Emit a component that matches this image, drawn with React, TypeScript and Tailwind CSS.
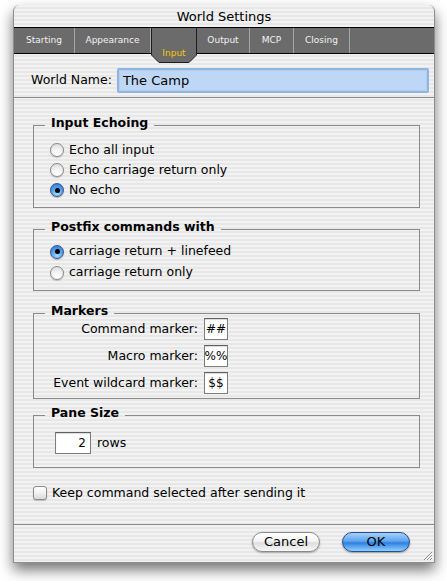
import React from "react";

const stripes =
  "bg-[repeating-linear-gradient(180deg,#f2f2f2_0px,#f2f2f2_2px,#e7e7e7_2px,#e7e7e7_4px)]";

function Radio({ checked }: { checked?: boolean }) {
  if (checked) {
    return (
      <div className="w-[14px] h-[14px] rounded-full border border-[#35588f] bg-[radial-gradient(circle_at_50%_80%,#a9dcff_0%,#5aa5ef_45%,#2b6fcf_100%)] flex items-center justify-center shadow-[0_1px_1px_rgba(0,0,0,0.25)]">
        <div className="w-[5px] h-[5px] rounded-full bg-black" />
      </div>
    );
  }
  return (
    <div className="w-[14px] h-[14px] rounded-full border border-[#8a8a8a] bg-[radial-gradient(circle_at_50%_85%,#ffffff_0%,#f3f3f3_45%,#d4d4d4_100%)] shadow-[0_1px_1px_rgba(0,0,0,0.2)]" />
  );
}

function RadioRow({ label, checked, h }: { label: string; checked?: boolean; h: string }) {
  return (
    <div className={`flex items-center gap-[5px] ${h}`}>
      <Radio checked={checked} />
      <span className="leading-none">{label}</span>
    </div>
  );
}

function Field({ value, className }: { value: string; className: string }) {
  return (
    <div
      className={`bg-white border border-[#7d7d7d] border-t-[#5f5f5f] shadow-[inset_0_1px_1px_rgba(0,0,0,0.15)] flex items-center text-[12px] ${className}`}
    >
      {value}
    </div>
  );
}

export default function App() {
  return (
    <div className="min-h-[581px] w-[447px] bg-white pt-[5px] pl-[13px] font-['DejaVu_Sans',sans-serif] text-[12.5px] text-black">
      <div
        className={`relative w-[422px] h-[558px] flex flex-col rounded-t-[6px] border-x border-b border-[#8e8e8e] overflow-hidden shadow-[0_7px_14px_rgba(0,0,0,0.55)] ${stripes}`}
      >
        {/* Title bar */}
        <div className="h-[22px] flex items-center justify-center text-[13px] pt-[1px]">
          World Settings
        </div>

        {/* Tab bar */}
        <div className="h-[27px] border-y border-black bg-[#6b6b6b] flex text-[9px] text-[#f2f2f2]">
          <div className="w-[61px] flex items-center justify-center border-r border-[#a5a5a5]">
            Starting
          </div>
          <div className="w-[76px] flex items-center justify-center border-r border-[#a5a5a5]">
            Appearance
          </div>
          <div className="relative w-[46px]">
            <svg
              className="absolute left-0 top-0 z-10"
              width="46"
              height="36"
              viewBox="0 0 46 36"
            >
              <path
                d="M0.5 0 V27 L8 34.5 H38 L45.5 27 V0"
                fill="#6b6b6b"
                stroke="#1e1e1e"
                strokeWidth="1"
              />
            </svg>
            <div className="absolute inset-x-0 top-[18px] z-20 text-center leading-[14px] text-[#f7c600]">
              Input
            </div>
          </div>
          <div className="w-[53px] flex items-center justify-center border-r border-[#a5a5a5]">
            Output
          </div>
          <div className="w-[44px] flex items-center justify-center border-r border-[#a5a5a5]">
            MCP
          </div>
          <div className="w-[56px] flex items-center justify-center border-r border-[#a5a5a5]">
            Closing
          </div>
          <div className="flex-1" />
        </div>

        {/* World name */}
        <div className="mt-[14px] mb-[4px] h-[25px] flex items-center pl-[17px] pr-[5px]">
          <span className="text-[12.5px] whitespace-nowrap">World Name:</span>
          <div className="ml-[5px] flex-1 h-[25px] border-2 border-[#8fb4e6] rounded-[2px] bg-[#bed7f7] shadow-[inset_0_0_0_1px_#b7cde9] flex items-center pl-[4px] text-[13px]">
            The Camp
          </div>
        </div>
        <div className="h-px bg-[#8a8a8a]" />

        {/* Content */}
        <div className="flex-1 flex flex-col pl-[19px] pr-[14px]">
          {/* Input Echoing */}
          <fieldset className="mt-[18px] border border-[#8a8a8a] p-0 m-0 min-w-0">
            <legend className="ml-[11px] px-[6px] pb-[4px] leading-[14px] font-bold">
              Input Echoing
            </legend>
            <div className="pl-[16px] pt-[6px] pb-[7px] flex flex-col">
              <RadioRow label="Echo all input" h="h-[20px]" />
              <RadioRow label="Echo carriage return only" h="h-[20px]" />
              <RadioRow label="No echo" checked h="h-[20px]" />
            </div>
          </fieldset>

          {/* Postfix */}
          <fieldset className="mt-[12px] border border-[#8a8a8a] p-0 m-0 min-w-0">
            <legend className="ml-[11px] px-[6px] pb-[4px] leading-[14px] font-bold">
              Postfix commands with
            </legend>
            <div className="pl-[16px] pt-[3px] pb-[7px] flex flex-col">
              <RadioRow label="carriage return + linefeed" checked h="h-[21px]" />
              <RadioRow label="carriage return only" h="h-[21px]" />
            </div>
          </fieldset>

          {/* Markers */}
          <fieldset className="mt-[13px] border border-[#8a8a8a] p-0 m-0 min-w-0">
            <legend className="ml-[11px] px-[6px] pb-[4px] leading-[14px] font-bold">
              Markers
            </legend>
            <div className="-mt-[4px] pb-[4px] grid grid-cols-[164px_24px] gap-x-[6px] gap-y-[5px] items-center">
              <span className="text-right">Command marker:</span>
              <Field value="##" className="h-[22px] justify-center" />
              <span className="text-right">Macro marker:</span>
              <Field value="%%" className="h-[22px] justify-center" />
              <span className="text-right">Event wildcard marker:</span>
              <Field value="$$" className="h-[22px] justify-center" />
            </div>
          </fieldset>

          {/* Pane Size */}
          <fieldset className="mt-[7px] border border-[#8a8a8a] p-0 m-0 min-w-0">
            <legend className="ml-[11px] px-[6px] pb-[4px] leading-[14px] font-bold">
              Pane Size
            </legend>
            <div className="pl-[21px] pt-[8px] pb-[13px] flex items-center gap-[6px]">
              <Field value="2" className="w-[36px] h-[22px] justify-end pr-[4px]" />
              <span>rows</span>
            </div>
          </fieldset>

          {/* Checkbox */}
          <div className="mt-[15px] h-[20px] flex items-center gap-[5px]">
            <div className="w-[14px] h-[14px] rounded-[3px] border border-[#8a8a8a] bg-[linear-gradient(180deg,#ffffff_0%,#f1f1f1_50%,#dadada_100%)] shadow-[0_1px_1px_rgba(0,0,0,0.2)]" />
            <span>Keep command selected after sending it</span>
          </div>

          <div className="flex-1" />
        </div>

        <div className="h-px bg-[#8a8a8a]" />

        {/* Buttons */}
        <div className="h-[37px] flex items-start justify-end pt-[7px] pr-[24px] gap-[22px] text-[13px]">
          <div className="w-[68px] h-[20px] rounded-full border border-[#8a8a8a] bg-[linear-gradient(180deg,#ffffff_0%,#f4f4f4_45%,#dedede_55%,#f8f8f8_100%)] shadow-[0_1px_2px_rgba(0,0,0,0.3)] flex items-center justify-center">
            Cancel
          </div>
          <div className="w-[68px] h-[20px] rounded-full border border-[#23508f] bg-[linear-gradient(180deg,#a8d0f8_0%,#5ea4ee_45%,#2f7fe0_55%,#8fd0ff_100%)] shadow-[0_1px_2px_rgba(0,0,0,0.35)] flex items-center justify-center">
            OK
          </div>
        </div>

        {/* Resize grip */}
        <svg className="absolute right-[1px] bottom-[1px]" width="11" height="11" viewBox="0 0 11 11">
          <path d="M10 2 L2 10 M10 5 L5 10 M10 8 L8 10" stroke="#8a8a8a" strokeWidth="1" />
          <path d="M10.5 3 L3 10.5 M10.5 6 L6 10.5 M10.5 9 L9 10.5" stroke="#ffffff" strokeWidth="1" />
        </svg>
      </div>
    </div>
  );
}
